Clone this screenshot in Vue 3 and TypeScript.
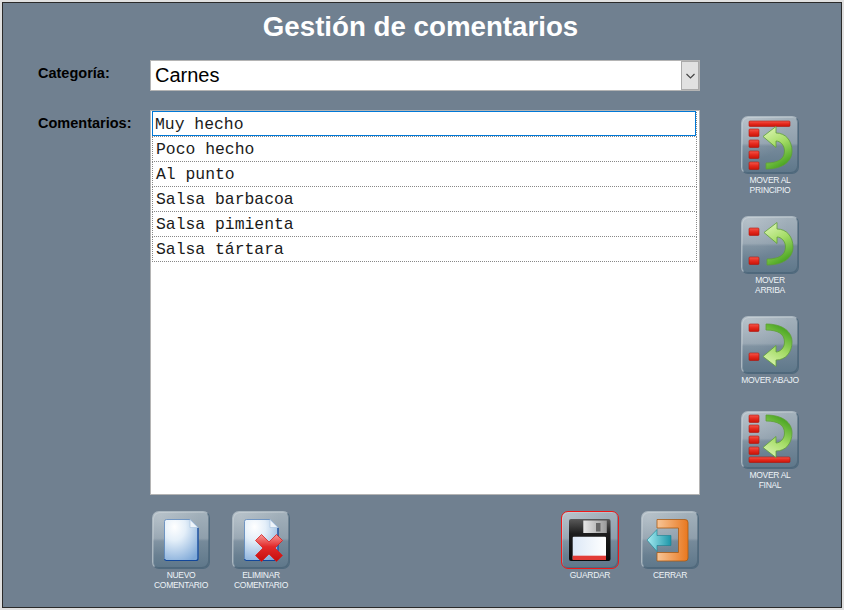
<script setup lang="ts">
type Tool = { icon: string; label: string[]; active?: boolean };

const comentarios = [
  "Muy hecho",
  "Poco hecho",
  "Al punto",
  "Salsa barbacoa",
  "Salsa pimienta",
  "Salsa tártara",
];

const sideTools: Tool[] = [
  { icon: "first", label: ["MOVER AL", "PRINCIPIO"] },
  { icon: "up", label: ["MOVER", "ARRIBA"] },
  { icon: "down", label: ["MOVER ABAJO"] },
  { icon: "last", label: ["MOVER AL", "FINAL"] },
];

const leftTools: Tool[] = [
  { icon: "new", label: ["NUEVO", "COMENTARIO"] },
  { icon: "delete", label: ["ELIMINAR", "COMENTARIO"] },
];

const rightTools: Tool[] = [
  { icon: "save", label: ["GUARDAR"], active: true },
  { icon: "close", label: ["CERRAR"] },
];

const arrow =
  "M22 20.5 L35 10.5 L35 17 C45 17 51 25 51 35 C51 46 41 53 25 53 L25 47 C37 47 43.5 43 43.5 35 C43.5 29 39 25 35 25 L35 31.5 Z";

const bars: Record<string, number[]> = {
  first: [13, 24, 35, 46],
  up: [12, 41],
  down: [8, 37],
  last: [4, 14, 25, 36],
};
</script>

<template>
  <svg class="defs" width="0" height="0" aria-hidden="true">
    <defs>
      <linearGradient id="red" x1="0" y1="0" x2="0" y2="1">
        <stop offset="0" stop-color="#f2584c" />
        <stop offset="0.5" stop-color="#e62a1e" />
        <stop offset="1" stop-color="#c81408" />
      </linearGradient>
      <linearGradient id="green" x1="0.1" y1="0" x2="0.5" y2="1">
        <stop offset="0" stop-color="#e0f6b8" />
        <stop offset="0.5" stop-color="#a4dc66" />
        <stop offset="1" stop-color="#4aa522" />
      </linearGradient>
      <radialGradient id="page" cx="0.3" cy="0.18" r="0.95">
        <stop offset="0" stop-color="#ffffff" />
        <stop offset="0.35" stop-color="#e4eff9" />
        <stop offset="1" stop-color="#7fa9d8" />
      </radialGradient>
      <linearGradient id="cross" x1="0" y1="0" x2="0" y2="1">
        <stop offset="0" stop-color="#f59a98" />
        <stop offset="0.45" stop-color="#e32a2a" />
        <stop offset="1" stop-color="#c40d0d" />
      </linearGradient>
      <linearGradient id="disk" x1="0" y1="0" x2="0" y2="1">
        <stop offset="0" stop-color="#5a5a5a" />
        <stop offset="0.35" stop-color="#1c1c1c" />
        <stop offset="1" stop-color="#0a0a0a" />
      </linearGradient>
      <linearGradient id="sheet" x1="0" y1="0" x2="1" y2="0">
        <stop offset="0" stop-color="#dce8f6" />
        <stop offset="1" stop-color="#ffffff" />
      </linearGradient>
      <linearGradient id="shutter" x1="0" y1="0" x2="1" y2="0">
        <stop offset="0" stop-color="#e8e8e8" />
        <stop offset="1" stop-color="#9a9a9a" />
      </linearGradient>
      <linearGradient id="orange" x1="0" y1="0" x2="1" y2="0">
        <stop offset="0" stop-color="#f7c597" />
        <stop offset="1" stop-color="#e9781f" />
      </linearGradient>
      <linearGradient id="cyan" x1="0" y1="0" x2="1" y2="0">
        <stop offset="0" stop-color="#a6ecf2" />
        <stop offset="1" stop-color="#1d96a8" />
      </linearGradient>
    </defs>
  </svg>

  <div class="window">
    <h1 class="title">Gestión de comentarios</h1>

    <div class="row row-category">
      <div class="field-label">Categoría:</div>
      <div class="combo">
        <span class="combo-text">Carnes</span>
        <span class="combo-btn">
          <svg width="9" height="6" viewBox="0 0 9 6"><path d="M0.5 1 L4.5 5 L8.5 1" fill="none" stroke="#444" stroke-width="1.2" /></svg>
        </span>
      </div>
    </div>

    <div class="row row-list">
      <div class="field-label">Comentarios:</div>
      <div class="list">
        <div v-for="(c, i) in comentarios" :key="c" class="item" :class="{ selected: i === 0 }">{{ c }}</div>
      </div>
      <div class="side">
        <div v-for="t in sideTools" :key="t.icon" class="tool" :class="'slot-' + t.icon">
          <div class="btn">
            <svg class="glyph" width="58" height="58" viewBox="0 0 58 58">
              <rect v-if="t.icon === 'first'" x="8" y="5" width="41" height="5.5" rx="1" fill="url(#red)" stroke="#b0140c" stroke-width="0.6" />
              <rect v-if="t.icon === 'last'" x="8" y="46" width="41" height="5.5" rx="1" fill="url(#red)" stroke="#b0140c" stroke-width="0.6" />
              <rect v-for="y in bars[t.icon]" :key="y" x="8" :y="y" width="10" height="7.5" rx="1" fill="url(#red)" stroke="#b0140c" stroke-width="0.6" />
              <path v-if="t.icon === 'first'" :d="arrow" fill="url(#green)" stroke="#5f9f38" stroke-width="0.8" />
              <path v-if="t.icon === 'up'" :d="arrow" transform="translate(1 -4)" fill="url(#green)" stroke="#5f9f38" stroke-width="0.8" />
              <path v-if="t.icon === 'down'" :d="arrow" transform="translate(0 61) scale(1 -1)" fill="url(#green)" stroke="#5f9f38" stroke-width="0.8" />
              <path v-if="t.icon === 'last'" :d="arrow" transform="translate(0 57) scale(1 -1)" fill="url(#green)" stroke="#5f9f38" stroke-width="0.8" />
            </svg>
          </div>
          <div class="tool-label"><div v-for="l in t.label" :key="l">{{ l }}</div></div>
        </div>
      </div>
    </div>

    <div class="row row-bottom">
      <div class="bottom-group">
        <div v-for="t in leftTools" :key="t.icon" class="tool">
          <div class="btn">
            <svg class="glyph" width="58" height="58" viewBox="0 0 58 58">
              <path d="M12.5 10.5 Q12.5 8.5 14.5 8.5 L38 8.5 L46 16.5 L46 47.5 Q46 49.5 44 49.5 L14.5 49.5 Q12.5 49.5 12.5 47.5 Z" fill="url(#page)" stroke="#5b86bd" stroke-width="0.8" />
              <path d="M46 17 L46 47.5 Q46 49.5 44 49.5 L14.5 49.5 Q12.8 49.5 12.5 48" fill="none" stroke="#12479a" stroke-width="1.2" />
              <path d="M38 8.5 L38 16.5 L46 16.5 Z" fill="#eef4fa" stroke="#a8c2de" stroke-width="0.6" />
              <path v-if="t.icon === 'delete'" d="M29.5 23.5 L37 31 L44.5 23.5 L50.5 29.5 L43 37 L50.5 44.5 L44.5 50.5 L37 43 L29.5 50.5 L23.5 44.5 L31 37 L23.5 29.5 Z" fill="url(#cross)" stroke="#d81e1e" stroke-width="0.8" stroke-linejoin="round" />
            </svg>
          </div>
          <div class="tool-label"><div v-for="l in t.label" :key="l">{{ l }}</div></div>
        </div>
      </div>
      <div class="bottom-group">
        <div v-for="t in rightTools" :key="t.icon" class="tool">
          <div class="btn" :class="{ active: t.active }">
            <svg class="glyph" width="58" height="58" viewBox="0 0 58 58">
              <template v-if="t.icon === 'save'">
                <path d="M8 10 Q8 8 10 8 L47.5 8 Q49.5 8 49.5 10 L49.5 48 Q49.5 50 47.5 50 L10 50 Q8 50 8 48 Z" fill="url(#disk)" />
                <rect x="22.3" y="9.5" width="23.5" height="12.5" fill="url(#shutter)" />
                <rect x="35" y="12" width="4.5" height="8.5" fill="#666" />
                <rect x="11.7" y="25.7" width="33.3" height="23.3" rx="1" fill="url(#sheet)" />
                <rect x="11.7" y="44.7" width="33.3" height="4.3" fill="#e23b36" />
              </template>
              <template v-if="t.icon === 'close'">
                <path d="M16 8.5 L44 8.5 Q47 8.5 47 11.5 L47 47 Q47 50 44 50 L16 50 L16 41.5 L37.5 41.5 L37.5 17 L16 17 Z" fill="url(#orange)" stroke="#a85a14" stroke-width="0.8" />
                <path d="M6 29 L16 18.5 L16 24.5 L30 24.5 L30 34.5 L16 34.5 L16 40.5 Z" fill="url(#cyan)" stroke="#177f90" stroke-width="0.6" />
              </template>
            </svg>
          </div>
          <div class="tool-label"><div v-for="l in t.label" :key="l">{{ l }}</div></div>
        </div>
      </div>
    </div>
  </div>
</template>

<style>
html,
body {
  margin: 0;
  background: #fff;
}
</style>

<style scoped>
.defs {
  position: absolute;
}
.window {
  box-sizing: border-box;
  width: 844px;
  height: 610px;
  border: 2px solid #e0e0e0;
  outline: 1px solid #2a2a2a;
  outline-offset: -3px;
  background: #708090;
  font-family: "Liberation Sans", Arial, sans-serif;
  display: flex;
  flex-direction: column;
  padding-top: 9px;
}
.title {
  margin: 0 3px 0 0;
  height: 31px;
  line-height: 31px;
  font-size: 27.7px;
  font-weight: bold;
  color: #fff;
  text-align: center;
}
.row {
  display: flex;
  padding-left: 36px;
}
.row-category {
  margin-top: 18px;
}
.row-list {
  margin-top: 19px;
  height: 385px;
}
.field-label {
  width: 112px;
  flex: none;
  font-size: 14.5px;
  font-weight: bold;
  color: #000;
  line-height: 16px;
  padding-top: 5px;
}
.combo {
  box-sizing: border-box;
  width: 550px;
  height: 31px;
  border: 1px solid #b4b4b4;
  background: #fff;
  display: flex;
  align-items: stretch;
}
.combo-text {
  flex: 1;
  padding-left: 4px;
  font-size: 20px;
  line-height: 28px;
  color: #000;
}
.combo-btn {
  box-sizing: border-box;
  width: 18px;
  border: 1px solid #aaa;
  background: #e1e1e1;
  display: flex;
  align-items: center;
  justify-content: center;
}
.list {
  box-sizing: border-box;
  width: 550px;
  border: 1px solid #b4b4b4;
  background: #fff;
  padding: 1px 2px 0 1px;
  flex: none;
}
.item {
  position: relative;
  box-sizing: border-box;
  height: 25px;
  padding-left: 3px;
  font-family: "Liberation Mono", "Courier New", monospace;
  font-size: 16.4px;
  line-height: 25px;
  color: #1a1a1a;
  border-left: 1px dotted #888;
  border-right: 1px dotted #888;
  border-bottom: 1px dotted #888;
}
.item.selected {
  border-left: none;
  padding-left: 3px;
}
.item.selected::after {
  content: "";
  position: absolute;
  inset: -1px 0 0 0;
  border: 1px solid #0078d7;
}
.side {
  margin-left: 41px;
  display: flex;
  flex-direction: column;
  padding-top: 6px;
}
.slot-first,
.slot-up {
  height: 100px;
}
.slot-down {
  height: 95px;
}
.bottom-group {
  display: flex;
  gap: 22px;
}
.row-bottom {
  margin-top: 16px;
  padding-left: 150px;
  width: 547px;
  justify-content: space-between;
}
.tool {
  width: 58px;
  display: flex;
  flex-direction: column;
  align-items: center;
}
.btn {
  position: relative;
  box-sizing: border-box;
  width: 58px;
  height: 58px;
  border-radius: 7px;
  border: 1px solid #aab7c0;
  border-right-color: #4f697d;
  border-bottom-color: #4f697d;
  box-shadow: inset 1px 1px 0 rgba(255, 255, 255, 0.2), inset -1px -1px 0 rgba(60, 85, 105, 0.45);
  background: radial-gradient(circle at 12% 8%, rgba(255, 255, 255, 0.22), rgba(255, 255, 255, 0) 55%),
    linear-gradient(180deg, #a3b1bb 0%, #8f9fac 47%, #768a9a 52%, #5e778a 100%);
  overflow: hidden;
}
.btn.active {
  border: 1px solid #f01818;
}
.glyph {
  position: absolute;
  left: -1px;
  top: -1px;
}
.tool-label {
  margin-top: 1px;
  width: 90px;
  font-size: 8.5px;
  letter-spacing: -0.3px;
  line-height: 10px;
  color: #eef3f7;
  text-align: center;
  white-space: nowrap;
}
</style>
